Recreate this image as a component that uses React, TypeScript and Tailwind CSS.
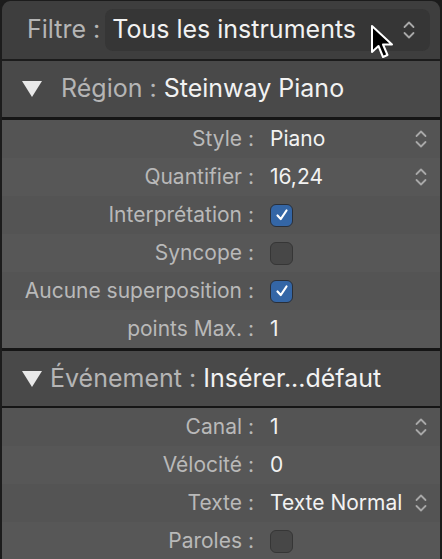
import React from "react";

const font = { fontFamily: "Inter, 'Noto Sans', 'Liberation Sans', sans-serif" };

function Chevrons() {
  return (
    <svg width="14" height="22" viewBox="0 0 14 22" fill="none" stroke="#a8a8a8" strokeWidth="1.8" strokeLinecap="round" strokeLinejoin="round">
      <path d="M2.5 8 L7 3.5 L11.5 8" />
      <path d="M2.5 14 L7 18.5 L11.5 14" />
    </svg>
  );
}

function Check({ on }: { on: boolean }) {
  if (on) {
    return (
      <div className="w-[23px] h-[23px] rounded-[6px] bg-[#3466a6] border border-[#2a2f38] flex items-center justify-center">
        <svg width="16" height="16" viewBox="0 0 16 16" fill="none" stroke="#ffffff" strokeWidth="2.2" strokeLinecap="round" strokeLinejoin="round">
          <path d="M3.5 8.5 L6.8 12 L12.5 3.5" />
        </svg>
      </div>
    );
  }
  return <div className="w-[23px] h-[23px] rounded-[6px] bg-[#474747] border border-[#363636]" />;
}

type Row = { label: string; value?: string; check?: boolean; stepper?: boolean };

function Rows({ rows }: { rows: Row[] }) {
  return (
    <div className="flex flex-col">
      {rows.map((r, i) => (
        <div
          key={r.label}
          className={`h-[38px] flex items-center ${i % 2 === 0 ? "bg-[#545454]" : "bg-[#575757]"}`}
        >
          <div className="w-[254px] text-right text-[21px] text-[#b9b9b9] pr-[2px] whitespace-nowrap">{r.label} :</div>
          <div className="flex-1 pl-[14px] flex items-center text-[21px] text-[#f2f2f2]">
            {r.check !== undefined ? <Check on={r.check} /> : <span>{r.value}</span>}
          </div>
          <div className="w-[30px] pr-[12px] flex justify-end">{r.stepper ? <Chevrons /> : null}</div>
        </div>
      ))}
    </div>
  );
}

function Triangle() {
  return (
    <svg width="20" height="16" viewBox="0 0 20 16">
      <path d="M0 0 L20 0 L10 16 Z" fill="#e8e8e8" />
    </svg>
  );
}

export default function App() {
  return (
    <div style={font} className="w-[442px] h-[559px] bg-[#1c1c1c] overflow-hidden">
      <div className="h-full border-l-2 border-r-2 border-t border-[#1c1c1c] rounded-tl-[10px] rounded-tr-[10px] overflow-hidden flex flex-col bg-[#1c1c1c]">
        {/* Filter */}
        <div className="h-[58px] bg-[#3e3e3e] flex items-center shrink-0 relative">
          <div className="pl-[25px] text-[25px] text-[#b5b5b5] whitespace-nowrap">Filtre :</div>
          <div className="ml-[5px] flex-1 mr-[10px] h-[42px] rounded-[8px] bg-[#363636] flex items-center pl-[7px] pr-[14px]">
            <span className="text-[25px] text-[#f2f2f2] flex-1 whitespace-nowrap">Tous les instruments</span>
            <Chevrons />
          </div>
          <svg className="absolute left-[368px] top-[23px]" width="28" height="38" viewBox="0 0 28 38">
            <path d="M2 2 L2 28 L8.5 22 L13 33 L17.5 31 L13 20.5 L22 20.5 Z" fill="#000" stroke="#fff" strokeWidth="2" strokeLinejoin="round" />
          </svg>
        </div>
        <div className="h-[2px] bg-[#1c1c1c] shrink-0" />
        {/* Region header */}
        <div className="h-[56px] bg-[#494949] flex items-center shrink-0">
          <div className="pl-[20px] pr-[19px] flex items-center"><Triangle /></div>
          <span className="text-[25px] text-[#b5b5b5] whitespace-nowrap">Région :&nbsp;</span>
          <span className="text-[25px] text-[#f2f2f2] whitespace-nowrap">Steinway Piano</span>
        </div>
        <div className="h-[3px] bg-[#151515] shrink-0" />
        <Rows
          rows={[
            { label: "Style", value: "Piano", stepper: true },
            { label: "Quantifier", value: "16,24", stepper: true },
            { label: "Interprétation", check: true },
            { label: "Syncope", check: false },
            { label: "Aucune superposition", check: true },
            { label: "points Max.", value: "1" },
          ]}
        />
        <div className="h-[3px] bg-[#151515] shrink-0" />
        {/* Event header */}
        <div className="h-[55px] bg-[#494949] flex items-center shrink-0">
          <div className="pl-[20px] pr-[8px] flex items-center"><Triangle /></div>
          <span className="text-[25px] text-[#b5b5b5] whitespace-nowrap">Événement :&nbsp;</span>
          <span className="text-[25px] text-[#f2f2f2] whitespace-nowrap">Insérer...défaut</span>
        </div>
        <div className="h-[2px] bg-[#151515] shrink-0" />
        <Rows
          rows={[
            { label: "Canal", value: "1", stepper: true },
            { label: "Vélocité", value: "0" },
            { label: "Texte", value: "Texte Normal", stepper: true },
            { label: "Paroles", check: false },
          ]}
        />
      </div>
    </div>
  );
}
